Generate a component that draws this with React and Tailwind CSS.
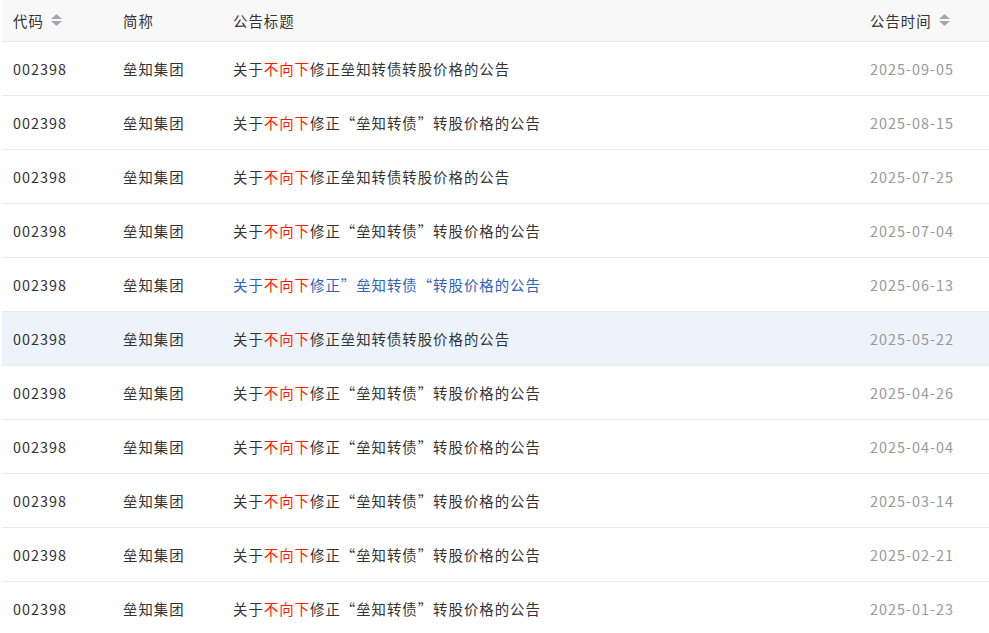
import React from "react";

const rows = [
  { t: "plain", d: "2025-09-05" },
  { t: "quote", d: "2025-08-15" },
  { t: "plain", d: "2025-07-25" },
  { t: "quote", d: "2025-07-04" },
  { t: "rev", d: "2025-06-13" },
  { t: "plain", d: "2025-05-22", hl: true },
  { t: "quote", d: "2025-04-26" },
  { t: "quote", d: "2025-04-04" },
  { t: "quote", d: "2025-03-14" },
  { t: "quote", d: "2025-02-21" },
  { t: "quote", d: "2025-01-23" },
];

function SortIcon() {
  return (
    <svg width="11" height="12" viewBox="0 0 11 12" className="ml-[7px] shrink-0">
      <polygon points="5.5,0 11,5 0,5" fill="#a3a7ae" />
      <polygon points="0,7 11,7 5.5,12" fill="#a3a7ae" />
    </svg>
  );
}

function Title({ t }) {
  const red = <span className="text-[#ff1a00]">不向下</span>;
  if (t === "plain")
    return (
      <span>
        关于{red}修正垒知转债转股价格的公告
      </span>
    );
  if (t === "quote")
    return (
      <span>
        关于{red}修正“垒知转债”转股价格的公告
      </span>
    );
  return (
    <span className="text-[#2d64b8]">
      关于{red}修正”垒知转债“转股价格的公告
    </span>
  );
}

export default function App() {
  const font = {
    fontFamily: '"Noto Sans CJK SC", "Noto Sans", sans-serif',
  };
  return (
    <div className="w-[989px] h-[633px] overflow-hidden bg-white" style={font} lang="zh-CN">
      <div className="ml-[2px] text-[14.4px] tracking-[1px] text-[#333]">
        <div className="grid grid-cols-[110px_110px_637px_130px] h-[42px] bg-[#f8f8f9] border-b border-[#e8eaec] items-center">
          <div className="pl-[11px] flex items-center">
            <span>代码</span>
            <SortIcon />
          </div>
          <div className="pl-[11px]">简称</div>
          <div className="pl-[11px]">公告标题</div>
          <div className="pl-[11px] flex items-center">
            <span>公告时间</span>
            <SortIcon />
          </div>
        </div>
        {rows.map((r, i) => (
          <div
            key={i}
            className={
              "grid grid-cols-[110px_110px_637px_130px] h-[54px] border-b border-[#e8eaec] items-center " +
              (r.hl ? "bg-[#ecf3fb]" : "bg-white")
            }
          >
            <div className="pl-[11px]">002398</div>
            <div className="pl-[11px]">垒知集团</div>
            <div className="pl-[11px]">
              <Title t={r.t} />
            </div>
            <div className="pl-[11px] text-[#999]">{r.d}</div>
          </div>
        ))}
      </div>
    </div>
  );
}
